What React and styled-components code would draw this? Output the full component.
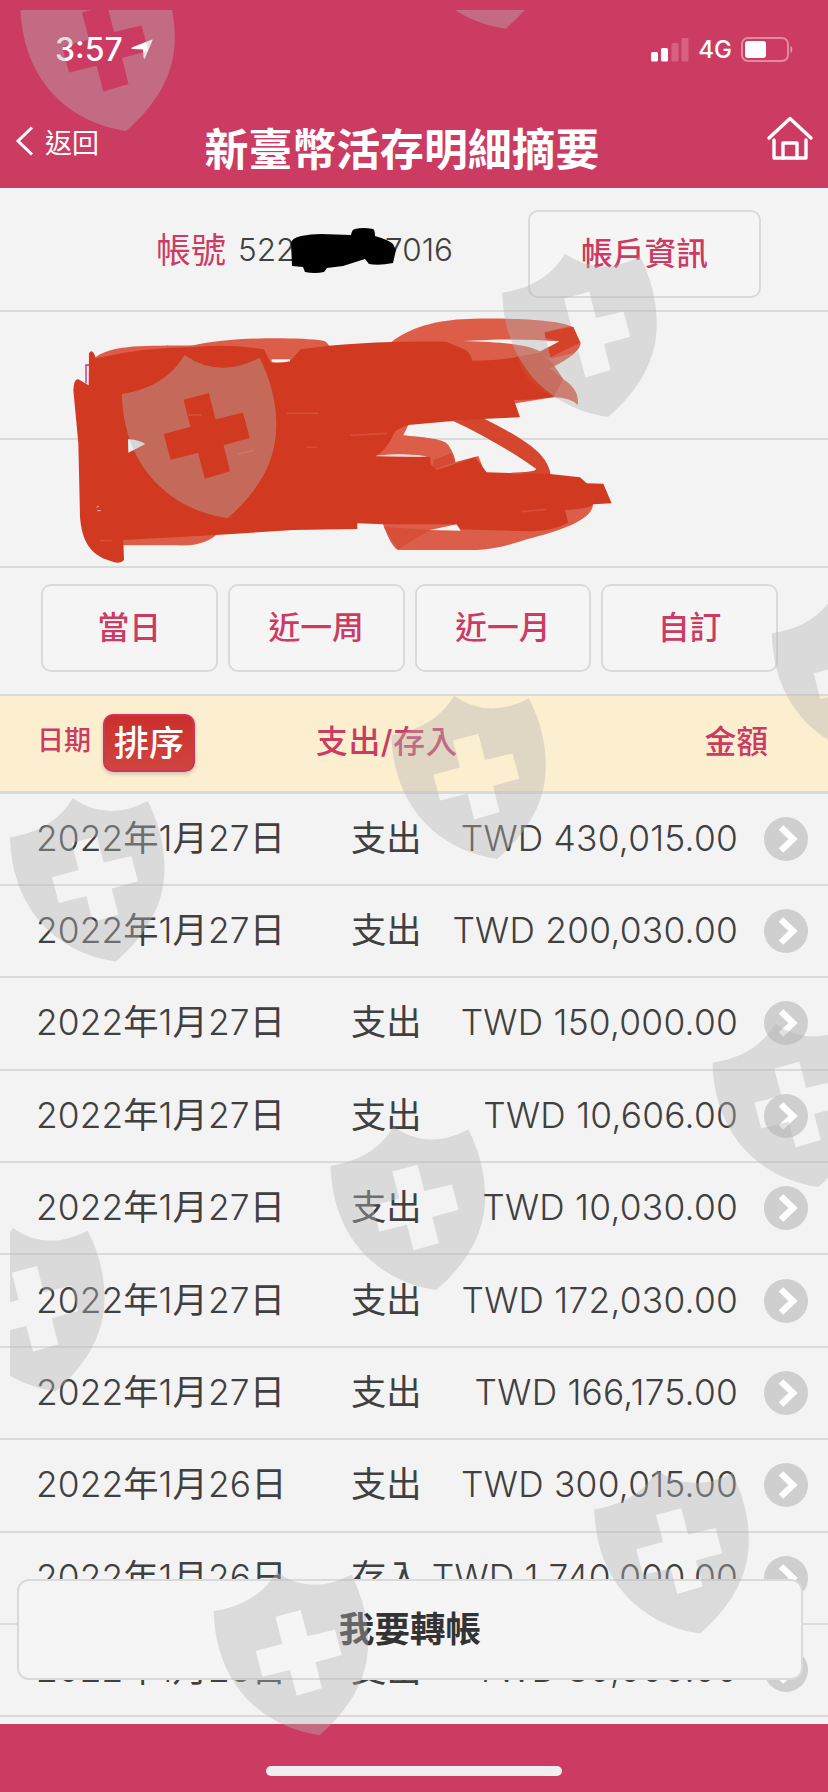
import styled, { createGlobalStyle } from "styled-components";

const colors = {
  primary: "#cb3b62",
  text: "#404040",
  dark: "#333333",
  background: "#f3f3f3",
  line: "#dadada",
  cream: "#fcefcf",
  scribble: "#d13a20",
  scribbleLight: "#dc5e49",
};

const GlobalStyle = createGlobalStyle`
  body {
    margin: 0;
    background: ${colors.background};
    font-family: "Inter", "Noto Sans CJK TC", sans-serif;
  }
  * {
    box-sizing: border-box;
  }
`;

const Page = styled.div`
  position: relative;
  width: 828px;
  height: 1792px;
  overflow: hidden;
  background: ${colors.background};
  color: ${colors.text};
  display: flex;
  flex-direction: column;
`;

const Header = styled.header`
  height: 188px;
  flex: none;
  background: ${colors.primary};
  color: white;
`;

const StatusBar = styled.div`
  display: flex;
  height: 98px;
  padding: 0 34px 0 55px;
  align-items: center;
  justify-content: space-between;
`;

const Clock = styled.div`
  display: flex;
  align-items: center;
  gap: 8px;
  font-size: 32px;
  font-weight: 500;
`;

const StatusIcons = styled.div`
  display: flex;
  align-items: center;
  gap: 9px;
  font-size: 24px;
  font-weight: 450;
`;

const NavBar = styled.div`
  display: grid;
  grid-template-columns: 178px 1fr 202px;
  height: 90px;
  align-items: center;
`;

const Back = styled.div`
  display: flex;
  align-items: center;
  gap: 11px;
  height: 90px;
  padding: 0 0 4px 15px;
  font-size: 27px;
  font-weight: 400;
`;

const Title = styled.h1`
  margin: 0;
  padding-top: 13px;
  font-size: 43.9px;
  line-height: 60px;
  font-weight: 700;
  text-align: center;
  white-space: nowrap;
`;

const HomeLink = styled.div`
  display: flex;
  justify-content: flex-end;
  padding: 0 14px 9px 0;
`;

const AccountRow = styled.section`
  display: flex;
  flex: none;
  height: 124px;
  padding: 0 67px 0 156px;
  align-items: center;
  border-bottom: 2px solid ${colors.line};
`;

const AccountLabel = styled.span`
  padding-bottom: 3px;
  font-size: 35px;
  font-weight: 400;
  color: ${colors.primary};
`;

const AccountNumber = styled.div`
  position: relative;
  display: flex;
  width: 215px;
  margin-left: 12px;
  justify-content: space-between;
  font-size: 31.5px;
  font-weight: 300;
`;

const Marker = styled.svg`
  position: absolute;
  left: 53px;
  top: -2px;
`;

const Button = styled.button`
  height: 88px;
  padding: 0 0 6px;
  border: 2px solid ${colors.line};
  border-radius: 10px;
  background: #f5f5f5;
  color: ${colors.primary};
  font-family: inherit;
  font-size: 31.8px;
  font-weight: 500;
`;

const InfoButton = styled(Button)`
  width: 233px;
  margin-left: auto;
  margin-top: 9px;
`;

const BlankRow = styled.section`
  flex: none;
  height: ${(props) => props.$height}px;
  border-bottom: 2px solid ${colors.line};
`;

const RangeRow = styled.section`
  display: grid;
  flex: none;
  grid-template-columns: repeat(4, 1fr);
  gap: 10px;
  height: 128px;
  padding: 16px 50px 0 41px;
  border-bottom: 2px solid ${colors.line};
`;

const TableHead = styled.div`
  display: flex;
  flex: none;
  height: 97.5px;
  padding: 0 60px 0 37px;
  align-items: center;
  border-bottom: 3px solid ${colors.line};
  background: ${colors.cream};
  color: ${colors.primary};
  font-size: 31.8px;
  font-weight: 500;
`;

const DateLabel = styled.span`
  width: 66px;
  padding-bottom: 9px;
  font-size: 27px;
`;

const SortButton = styled.button`
  width: 92px;
  height: 58px;
  padding: 0;
  border: 2px solid #d0335c;
  border-radius: 10px;
  background: linear-gradient(#cb2f2c, #d04540);
  box-shadow: 0 2px 4px rgba(0, 0, 0, 0.2);
  color: white;
  font-family: inherit;
  font-size: 35px;
  line-height: 50px;
  font-weight: 500;
  white-space: nowrap;
`;

const TypeLabel = styled.span`
  margin-left: 121px;
  padding-bottom: 8px;
  letter-spacing: 0.6px;
`;

const AmountLabel = styled.span`
  margin-left: auto;
  padding-bottom: 8px;
`;

const Row = styled.div`
  display: grid;
  flex: none;
  grid-template-columns: 315px 73px 1fr 44px;
  height: 92.4px;
  padding: 0 20px 0 36px;
  align-items: center;
  border-bottom: 2px solid ${colors.line};
  font-size: 35.3px;
  line-height: 50px;
  font-weight: 300;
  white-space: nowrap;
`;

const RecordDate = styled.span`
  letter-spacing: 0.1px;
`;

const Unit = styled.span`
  font-weight: 400;
`;

const Amount = styled.span`
  justify-self: end;
  margin-right: 26px;
  letter-spacing: 0.25px;
`;

const TransferButton = styled(Button)`
  position: absolute;
  left: 17px;
  top: 1579px;
  width: 786px;
  height: 101px;
  border-radius: 12px;
  color: ${colors.dark};
  font-size: 35.6px;
  font-weight: 700;
`;

const BottomBar = styled.footer`
  display: flex;
  height: 68px;
  margin-top: auto;
  flex: none;
  justify-content: center;
  align-items: flex-end;
  padding-bottom: 16px;
  background: ${colors.primary};
`;

const HomeIndicator = styled.div`
  width: 296px;
  height: 10px;
  border-radius: 5px;
  background: #f0eeee;
`;

const Scribble = styled.svg`
  position: absolute;
  left: 60px;
  top: 310px;
`;

const Watermark = styled.svg`
  position: absolute;
  left: 10px;
  top: 10px;
  pointer-events: none;
`;

const ranges = ["當日", "近一周", "近一月", "自訂"];

const records = [
  { date: "2022年1月27日", type: "支出", amount: "430,015.00" },
  { date: "2022年1月27日", type: "支出", amount: "200,030.00" },
  { date: "2022年1月27日", type: "支出", amount: "150,000.00" },
  { date: "2022年1月27日", type: "支出", amount: "10,606.00" },
  { date: "2022年1月27日", type: "支出", amount: "10,030.00" },
  { date: "2022年1月27日", type: "支出", amount: "172,030.00" },
  { date: "2022年1月27日", type: "支出", amount: "166,175.00" },
  { date: "2022年1月26日", type: "支出", amount: "300,015.00" },
  { date: "2022年1月26日", type: "存入", amount: "1,740,000.00" },
  { date: "2022年1月26日", type: "支出", amount: "30,000.00" },
];

const shields = [
  [20.3, 6.7],
  [400, -95.6],
  [502.3, 292.7],
  [121.8, 394],
  [771.7, 633.3],
  [391.3, 734.7],
  [10, 837.3],
  [712.5, 1062.7],
  [330.6, 1165.7],
  [-50, 1267],
  [594.3, 1509.3],
  [213.7, 1611],
];

const shieldPath =
  "M0 0C28 -4 50 -17 62.7 -39Q97 -15 137.7 -36.3C149 -14 154.5 8 154.5 31C154.5 67 137 97 105.7 124.3C50 116 2 75 0 0Z" +
  "M61.7 5.7L68.7 32.7L42 40L48.7 65.7L76.3 59L83 84.7L108.3 77.3L101.7 51.3L128 44L121.3 18.7L93.7 25.3L87 -1Z";

function Arrow() {
  return (
    <svg width="44" height="44" viewBox="0 0 44 44">
      <circle cx="22" cy="22" r="22" fill="#cfcfcf" />
      <path d="M17 10.5L29 22L17 33.5" fill="none" stroke="white" strokeWidth="6.5" />
    </svg>
  );
}

function SignalIcon() {
  return (
    <svg width="38" height="25" viewBox="0 0 38 25" fill="white">
      <rect x="0" y="15" width="7" height="9.5" rx="1.5" />
      <rect x="10" y="11" width="7" height="13.5" rx="1.5" />
      <rect x="20.5" y="6" width="7" height="18.5" rx="1.5" opacity="0.2" />
      <rect x="30.5" y="1" width="7" height="23.5" rx="1.5" opacity="0.2" />
    </svg>
  );
}

function BatteryIcon() {
  return (
    <svg width="53" height="25" viewBox="0 0 53 25">
      <rect x="1" y="1" width="46" height="23" rx="6" fill="none" stroke="white" strokeWidth="2" opacity="0.4" />
      <rect x="4" y="4" width="21" height="17" rx="3" fill="white" />
      <path d="M49.5 8.5Q53 12.5 49.5 16.5Z" fill="white" opacity="0.5" />
    </svg>
  );
}

function RedScribble() {
  return (
    <Scribble width="580" height="260" viewBox="0 0 1740 780">
      <path d="M78 220V165H92" fill="none" stroke="#c42a78" strokeWidth="4" />
      <g fill={colors.scribbleLight}>
        <path d="M108 140C170 98 300 110 400 106C500 82 700 80 790 92Q815 98 820 160H108Z" />
        <path
          fillRule="evenodd"
          d="M995 95C1060 45 1150 27 1240 26C1350 24 1500 28 1540 52L1562 98Q1562 130 1470 175L1510 208Q1560 240 1553 285Q1530 262 1480 262L1300 290L1130 150ZM1210 93C1320 85 1420 88 1500 94L1440 124C1400 104 1330 96 1210 93Z"
        />
        <path d="M1045 345L1030 376C1080 382 1150 384 1165 405Q1185 435 1186 456L1255 438L1280 500L900 520V350ZM945 437Q1050 428 1105 440Q1000 440 945 437Z" fillRule="evenodd" />
        <path
          fillRule="evenodd"
          d="M1599 585C1595 640 1450 675 1400 688C1300 722 1260 720 1200 720H1015Q995 715 968 640L1100 600ZM1110 660L1190 643L1202 662Z"
        />
        <path d="M180 660V706H350Q440 710 478 665Z" />
      </g>
      <g fill={colors.scribble}>
        <path d="M40 240Q42 205 55 208L86 226L87 130Q97 112 108 145Q250 112 390 112Q500 100 612 118L632 158L690 154L722 118Q900 92 1160 95L1160 96L1216 119Q1232 130 1237 152Q1320 152 1375 140Q1380 210 1480 258Q1440 270 1362 270L1380 322L1280 326L1170 334L1045 345Q1000 360 1000 374Q980 420 945 440L1110 440L1112 462L1130 480L1245 442L1280 487L1470 492L1560 502L1580 520L1630 521L1655 580L1600 583Q1595 596 1515 600L1525 638Q1480 662 1410 664L1202 658L1190 643L970 643L892 640V657L700 660L480 674L190 690L192 750Q180 765 150 752C90 735 65 690 60 620L55 400Z" />
        <path d="M1178 332L1270 325C1350 365 1410 400 1442 434Q1470 465 1472 498L1350 488Q1430 488 1428 476C1340 415 1260 370 1178 332Z" opacity="0.94" />
        <path d="M1370 140L1440 128L1478 160L1510 208L1480 262L1400 266Z" opacity="0.8" />
        <path d="M1455 65L1540 50L1560 98L1465 145L1440 128L1498 94L1455 84Z" opacity="0.75" />
        <path d="M1120 450L1175 430L1186 456L1120 480Z" opacity="0.55" />
        <path d="M970 650L1015 718L1060 690L1110 660Z" opacity="0.4" />
      </g>
      <g fill="none" stroke="#e0715f" strokeWidth="5" opacity="0.4">
        <path d="M680 310H775" />
        <path d="M740 412H770" />
        <path d="M535 432L583 420" />
        <path d="M870 376L980 370" />
        <path d="M385 315H425" />
        <path d="M120 692H155" />
        <path d="M1385 605L1460 598" />
      </g>
      <path d="M204 388Q235 388 256 402L205 428Z" fill="#e8eeee" />
      <path d="M635 148L690 148L690 154Q660 160 635 156Z" fill="#f3f3f3" />
      <path d="M945 438Q1020 426 1100 440Z" fill="#f0d9d4" />
      <path d="M110 592L116 588M112 602H122" stroke="#efc4dc" strokeWidth="3" />
    </Scribble>
  );
}

function Shields() {
  return (
    <Watermark width="818" height="1782" viewBox="10 10 818 1782">
      {shields.map(([x, y]) => (
        <path
          key={`${x}-${y}`}
          d={shieldPath}
          transform={`translate(${x} ${y})`}
          fill="#b4b4b4"
          fillOpacity="0.4"
          fillRule="evenodd"
        />
      ))}
    </Watermark>
  );
}

function Record(props) {
  return (
    <Row>
      <RecordDate>
        {props.date.split(/([年月日])/).map((part, index) =>
          index % 2 ? <Unit key={index}>{part}</Unit> : part
        )}
      </RecordDate>
      <Unit>{props.type}</Unit>
      <Amount>TWD {props.amount}</Amount>
      <Arrow />
    </Row>
  );
}

export default function App() {
  return (
    <Page>
      <GlobalStyle />
      <Header>
        <StatusBar>
          <Clock>
            3:57
            <svg width="22" height="21" viewBox="0 0 22 21" fill="white">
              <path d="M21 0.5Q22 0 21.5 1.5L14 19Q13 21 12.5 18.5L12 10.5L2 10Q-1 9.500 1.500 8.300Z" />
            </svg>
          </Clock>
          <StatusIcons>
            <SignalIcon />
            4G
            <BatteryIcon />
          </StatusIcons>
        </StatusBar>
        <NavBar>
          <Back>
            <svg width="19" height="30" viewBox="0 0 19 30">
              <path d="M17 1.500L3 15L17 28.500" fill="none" stroke="white" strokeWidth="3" />
            </svg>
            返回
          </Back>
          <Title>新臺幣活存明細摘要</Title>
          <HomeLink>
            <svg width="48" height="46" viewBox="0 0 48 46" fill="none" stroke="white" strokeWidth="3.4" strokeLinejoin="round" strokeLinecap="round">
              <path d="M3 22L24 2.500L45 22" />
              <path d="M8 24V42H40V24" />
              <path d="M17 42V27H31V42" />
            </svg>
          </HomeLink>
        </NavBar>
      </Header>
      <AccountRow>
        <AccountLabel>帳號</AccountLabel>
        <AccountNumber>
          <span>522</span>
          <span>7016</span>
          <Marker width="105" height="45" viewBox="0 0 105 45">
            <path d="M0 15Q1 10 10 8Q20 6 30 6L60 7Q61 1 64 1Q72 -1 82 1Q84 2 84 8Q98 12 102 16L105 22L102 35Q88 38 78 36L74 31L52 38L36 40L33 44Q24 46 14 44L12 39L1 38Z" fill="black" />
          </Marker>
        </AccountNumber>
        <InfoButton>帳戶資訊</InfoButton>
      </AccountRow>
      <BlankRow $height={127.5} />
      <BlankRow $height={128.5} />
      <RangeRow>
        {ranges.map((range) => (
          <Button key={range}>{range}</Button>
        ))}
      </RangeRow>
      <TableHead>
        <DateLabel>日期</DateLabel>
        <SortButton>排序</SortButton>
        <TypeLabel>支出/存入</TypeLabel>
        <AmountLabel>金額</AmountLabel>
      </TableHead>
      {records.map((record, index) => (
        <Record key={index} {...record} />
      ))}
      <BottomBar>
        <HomeIndicator />
      </BottomBar>
      <TransferButton>我要轉帳</TransferButton>
      <RedScribble />
      <Shields />
    </Page>
  );
}
